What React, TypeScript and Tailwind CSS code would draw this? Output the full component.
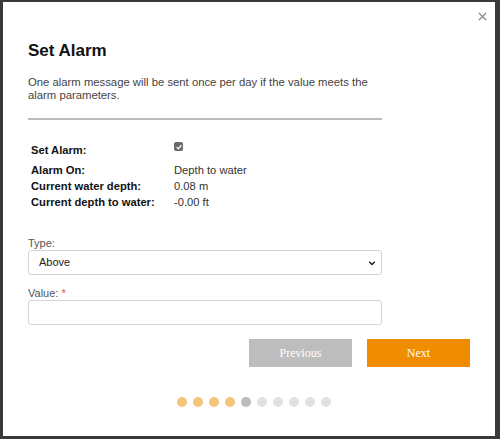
import { X } from "lucide-react";

const rows = [
  { label: "Alarm On:", value: "Depth to water" },
  { label: "Current water depth:", value: "0.08 m" },
  { label: "Current depth to water:", value: "-0.00 ft" },
];

const dots = ["done", "done", "done", "done", "current", "todo", "todo", "todo", "todo", "todo"];

export default function App() {
  return (
    <div className="w-[500px] h-[439px] bg-[#3a3a3c] pt-[2px] pl-[3px] pr-[5px] pb-[3px] font-['Liberation_Sans',Arial,sans-serif]">
      <div className="relative h-full bg-white pl-[25px] pt-[38px]">
        <button className="absolute right-[6px] top-[8px] text-[#888]">
          <X className="w-[13px] h-[13px]" strokeWidth={2.3} />
        </button>

        <h1 className="text-[17px] font-bold text-[#111] leading-[22px]">Set Alarm</h1>
        <p className="mt-[14px] w-[360px] text-[11.3px] leading-[13px] text-[#444]">
          One alarm message will be sent once per day if the value meets the alarm parameters.
        </p>
        <div className="mt-[16px] w-[354px] h-[2px] bg-[#bcbcbc]" />

        <div className="mt-[18px] pl-[3px] text-[11.2px] text-[#111]">
          <div className="flex items-start">
            <span className="w-[143px] pt-[4px] font-bold leading-[16px]">Set Alarm:</span>
            <span className="mt-[4px] w-[9px] h-[9px] rounded-[2px] bg-[#6b6b6b] flex items-center justify-center">
              <svg viewBox="0 0 10 10" className="w-[8px] h-[8px]">
                <path d="M2 5.2 L4.1 7.2 L8 2.8" fill="none" stroke="white" strokeWidth="1.6" />
              </svg>
            </span>
          </div>
          <div className="mt-[4px] flex flex-col">
            {rows.map((r) => (
              <div key={r.label} className="flex leading-[16px]">
                <span className="w-[143px] font-bold">{r.label}</span>
                <span className="text-[#333]">{r.value}</span>
              </div>
            ))}
          </div>
        </div>

        <label className="block mt-[26px] text-[11px] leading-[14px] text-[#555]">Type:</label>
        <div className="w-[354px] h-[25px] rounded-[3px] border border-[#d4d4d4] flex items-center justify-between pl-[10px] pr-[5px] text-[11px] text-[#222]">
          <span>Above</span>
          <svg viewBox="0 0 10 10" className="w-[8px] h-[8px]">
            <path d="M1.5 3.5 L5 7 L8.5 3.5" fill="none" stroke="#222" strokeWidth="1.8" />
          </svg>
        </div>

        <label className="block mt-[11px] text-[11px] leading-[14px] text-[#555]">
          Value: <span className="text-[#d9534f]">*</span>
        </label>
        <div className="w-[354px] h-[25px] rounded-[3px] border border-[#d4d4d4]" />

        <div className="mt-[14px] flex justify-end gap-[15px] pr-[25px]">
          <button className="w-[103px] h-[28px] bg-[#bdbdbd] text-white text-[12px] font-['Liberation_Serif',Georgia,serif]">
            Previous
          </button>
          <button className="w-[103px] h-[28px] bg-[#f08c00] text-white text-[12px] font-['Liberation_Serif',Georgia,serif]">
            Next
          </button>
        </div>

        <div className="mt-[30px] flex justify-center gap-[6px] pr-[16px]">
          {dots.map((d, i) => (
            <span
              key={i}
              className={
                d === "done"
                  ? "w-[10px] h-[10px] rounded-full bg-[#f4c57c]"
                  : d === "current"
                  ? "w-[10px] h-[10px] rounded-full bg-[#bcbcbc]"
                  : "w-[10px] h-[10px] rounded-full bg-[#e2e2e2]"
              }
            />
          ))}
        </div>
      </div>
    </div>
  );
}
